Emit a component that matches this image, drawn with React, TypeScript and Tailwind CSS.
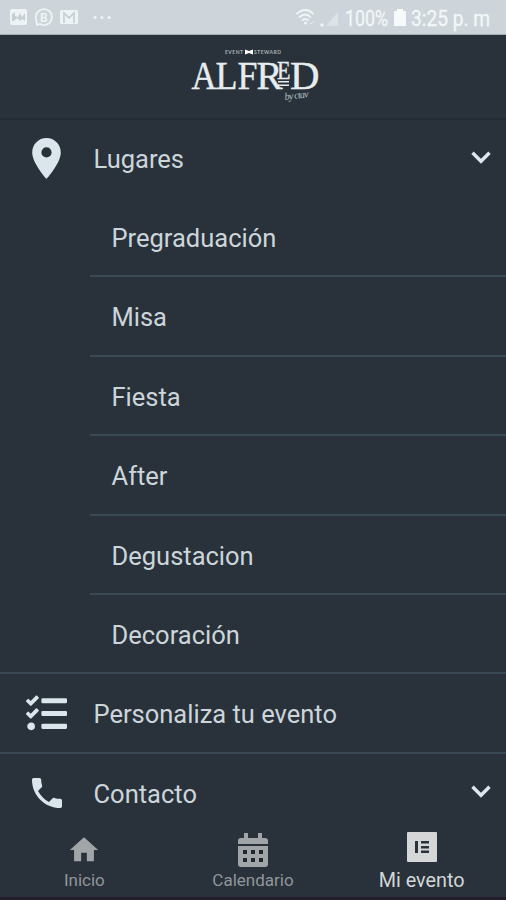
import React from "react";
import { MdHome, MdLocationOn, MdPhone } from "react-icons/md";
import { FaTasks } from "react-icons/fa";

const places = [
  "Pregraduación",
  "Misa",
  "Fiesta",
  "After",
  "Degustacion",
  "Decoración",
];

// the wordmark letters are spaced by hand, with a small raised E
const logoLetters = [
  { letter: "A", x: 191.5, y: 89, size: 40, width: 25 },
  { letter: "L", x: 215.5, y: 89, size: 40, width: 22 },
  { letter: "F", x: 237.5, y: 89, size: 40, width: 20 },
  { letter: "R", x: 256.5, y: 89, size: 40, width: 26 },
  { letter: "E", x: 277, y: 79, size: 26, width: 13.5 },
  { letter: "D", x: 290, y: 89, size: 40, width: 29.5 },
];

const StatusBar = () => (
  <div className="flex h-[35px] shrink-0 items-center justify-between border-b border-[#9fb0b5] bg-[#cdd5da] text-[#f3f7f9]">
    <svg width="120" height="34" viewBox="0 0 120 34" fill="none">
      <rect x="10" y="9" width="17" height="16" rx="2" fill="#eef3f5" />
      <path
        d="M12 21V14l3-2v4l3 1 2-4 2 4 3-4v8l-3-2-2 2-3-3-3 3z"
        fill="#c6cfd4"
      />
      <path
        d="M37 25l-1-7a8 8 0 1 1 4 6z"
        stroke="#eef3f5"
        strokeWidth="1.8"
      />
      <text
        x="40"
        y="22"
        fontSize="12"
        fontWeight="700"
        fontFamily="Roboto, sans-serif"
        fill="#eef3f5"
      >
        B
      </text>
      <rect x="60" y="10" width="18" height="14" rx="1.5" fill="#eef3f5" />
      <path d="M64 23V13l5 5 5-5v10" stroke="#c3cdd2" strokeWidth="1.6" />
      <circle cx="95" cy="17.5" r="1.6" fill="#eef3f5" />
      <circle cx="102" cy="17.5" r="1.6" fill="#eef3f5" />
      <circle cx="109" cy="17.5" r="1.6" fill="#eef3f5" />
    </svg>
    <svg width="210" height="34" viewBox="296 0 210 34" fill="none">
      <g stroke="#f0f5f7" strokeWidth="1.8">
        <path d="M296.500 14q9-8 17 0" />
        <path d="M299 17.500q6.500-6 12 0" />
        <path d="M302 20.500q3.500-3 6.500 0" />
      </g>
      <circle cx="305.500" cy="23" r="1.500" fill="#f0f5f7" />
      <path d="M309 22l2 2 3-3" stroke="#e2e9ec" />
      <circle cx="322" cy="25" r="1.800" fill="#f0f5f7" />
      <path d="M326 26L338 12v14z" fill="#dbe3e7" />
      <g
        fontFamily="Roboto, sans-serif"
        fontSize="22"
        fill="currentColor"
        stroke="currentColor"
        strokeWidth="0.3"
      >
        <text x="345" y="26" textLength="43" lengthAdjust="spacingAndGlyphs">
          100%
        </text>
        <text x="411" y="26" textLength="79" lengthAdjust="spacingAndGlyphs">
          3:25 p. m
        </text>
      </g>
      <path d="M397 9h6v2h3v15h-12V11h3z" fill="#f6fafb" />
    </svg>
  </div>
);

const Header = () => (
  <header className="flex h-[85px] shrink-0 justify-center border-b-2 border-[#222b31]">
    <svg width="150" height="80" viewBox="178 35 150 80" fill="#e6ecef">
      <g
        fontFamily="Lato, sans-serif"
        fontSize="5"
        fontWeight="700"
        fill="#a9b3b9"
      >
        <text x="225" y="54" textLength="18">
          EVENT
        </text>
        <text x="254" y="54" textLength="27">
          STEWARD
        </text>
      </g>
      <path d="M245 49.500l4 1.500 4-1.500v5l-4-1.500-4 1.500z" fill="#fff" />
      <g
        fontFamily="Liberation Serif, serif"
        stroke="#e6ecef"
        strokeWidth="0.4"
      >
        {logoLetters.map(({ letter, x, y, size, width }) => (
          <text
            key={letter}
            x={x}
            y={y}
            fontSize={size}
            textLength={width}
            lengthAdjust="spacingAndGlyphs"
          >
            {letter}
          </text>
        ))}
      </g>
      <path d="M278 81h11v1.500h-11zM278 84.500h11v1.500h-11z" />
      <text
        x="285"
        y="100"
        fontSize="10"
        fontStyle="italic"
        fontFamily="Liberation Serif, serif"
        fill="#b8c2c7"
        textLength="24"
        transform="rotate(-7 285 100)"
      >
        by ctav
      </text>
    </svg>
  </header>
);

const Chevron = () => (
  <svg
    className="mr-[15px] mb-[3px]"
    width="20"
    height="13"
    viewBox="0 0 20 13"
    fill="none"
  >
    <path d="M1.500 1.800L10 10.300l8.500-8.500" stroke="#dce8ed" strokeWidth="3.400" />
  </svg>
);

type RowProps = {
  icon: React.ReactNode;
  label: string;
  expandable?: boolean;
  className: string;
};

const Row = ({ icon, label, expandable, className }: RowProps) => (
  <button className={"flex w-full shrink-0 items-center text-left " + className}>
    <span className="flex w-[93.500px] justify-center text-[#dae6eb]">
      {icon}
    </span>
    <span className="flex-1 pt-px">{label}</span>
    {expandable && <Chevron />}
  </button>
);

const CalendarIcon = () => (
  <svg width="32" height="34" viewBox="0 0 32 34" fill="#a1a5a8">
    <path d="M7 0h4v5h10V0h4v5h3a3 3 0 0 1 3 3v3H1V8a3 3 0 0 1 3-3h3z" />
    <path d="M1 13h30v18a3 3 0 0 1-3 3H4a3 3 0 0 1-3-3z" />
    <path
      d="M6 17h4v4H6zM14 17h4v4h-4zM22 17h4v4h-4zM6 25h4v4H6zM14 25h4v4h-4zM22 25h4v4h-4z"
      fill="#1d272d"
    />
  </svg>
);

const EventIcon = () => (
  <svg width="30" height="30" viewBox="0 0 30 30">
    <rect width="30" height="30" rx="1" fill="#d4d6d8" />
    <path
      d="M8 9h3v12H8zM14 9h8v2.500h-8zM14 14h8v2.500h-8zM14 18.500h8V21h-8z"
      fill="#29323a"
    />
  </svg>
);

const TabBar = () => (
  <nav className="grid h-[68px] shrink-0 grid-cols-3 border-b-[3px] border-[#241d2b] text-[#90969a]">
    <button className="flex flex-col items-center">
      <span className="flex h-9 items-center text-[#a1a5a8]">
        <MdHome size={34} />
      </span>
      <span className="text-[17px] leading-6">Inicio</span>
    </button>
    <button className="flex flex-col items-center">
      <span className="flex h-9 items-center">
        <CalendarIcon />
      </span>
      <span className="text-[17px] leading-6">Calendario</span>
    </button>
    <button className="flex flex-col items-center text-[#d3d6d8]">
      <span className="flex h-9 items-start">
        <EventIcon />
      </span>
      <span className="pt-0.5 text-[19.800px] leading-[22px]">Mi evento</span>
    </button>
  </nav>
);

const App = () => {
  return (
    <div className="flex h-[900px] w-[506px] flex-col overflow-hidden bg-[#29323a] font-['Roboto',sans-serif] text-[25.500px] text-[#ccd5da]">
      <StatusBar />
      <Header />
      <main className="flex flex-col">
        <Row
          className="h-[77px]"
          icon={<MdLocationOn size={49} />}
          label="Lugares"
          expandable
        />
        <ul className="flex flex-col pt-px">
          {places.map((place) => (
            <li
              key={place}
              className="ml-[90px] flex h-[79.400px] items-center border-b-2 border-[#394a54] pt-[3px] pl-[21.500px] last:ml-0 last:pl-[111.500px]"
            >
              {place}
            </li>
          ))}
        </ul>
        <Row
          className="h-[79.500px] border-b-2 border-[#394a54] pt-px"
          icon={<FaTasks size={41} />}
          label="Personaliza tu evento"
        />
        <Row
          className="h-[78px] pt-px"
          icon={<MdPhone size={40} />}
          label="Contacto"
          expandable
        />
      </main>
      <TabBar />
    </div>
  );
};

export default App;
